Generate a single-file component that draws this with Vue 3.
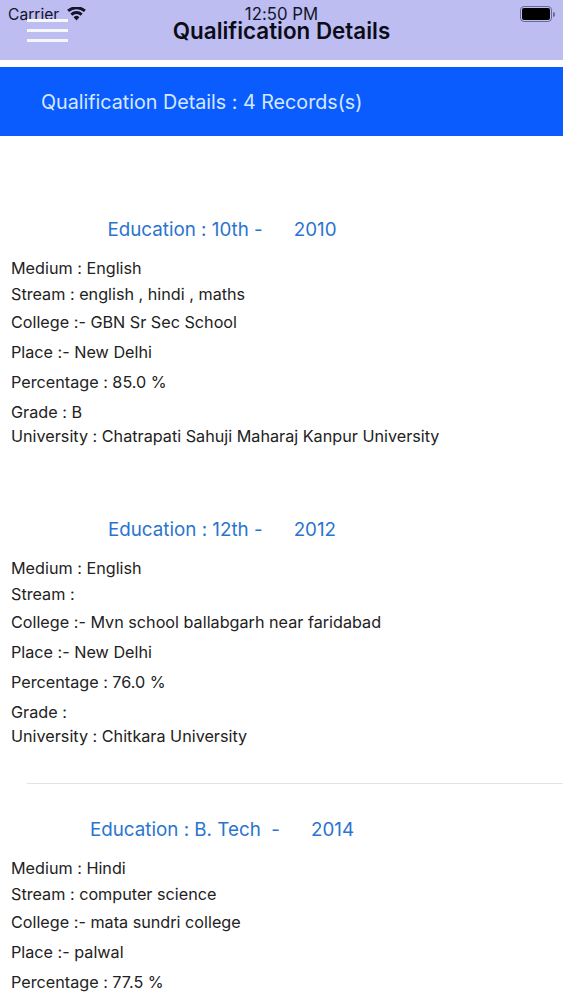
<script setup>
const records = [
  { title: 'Education : 10th -', year: '2010', medium: 'English', stream: 'english , hindi , maths', college: 'GBN Sr Sec School', place: 'New Delhi', pct: '85.0', grade: 'B', university: 'Chatrapati Sahuji Maharaj Kanpur University', full: true },
  { title: 'Education : 12th -', year: '2012', medium: 'English', stream: '', college: 'Mvn school ballabgarh near faridabad', place: 'New Delhi', pct: '76.0', grade: '', university: 'Chitkara University', full: true, divider: true },
  { title: 'Education : B. Tech  -', year: '2014', medium: 'Hindi', stream: 'computer science', college: 'mata sundri college', place: 'palwal', pct: '77.5', full: false }
]
</script>

<template>
  <div class="screen">
    <header class="nav">
      <div class="status">
        <div class="status-left">
          <span class="carrier">Carrier</span>
          <svg class="wifi" viewBox="0 0 20 15" width="19" height="14">
            <path d="M10 14.5 6.9 10.9a4.6 4.6 0 0 1 6.2 0Z" fill="#14142b"/>
            <path d="M5.5 9.3 3.4 6.9a10 10 0 0 1 13.2 0l-2.1 2.4a6.8 6.8 0 0 0-9 0Z" fill="#14142b"/>
            <path d="M2 5.3 0 3A15.2 15.2 0 0 1 20 3l-2 2.3a12.2 12.2 0 0 0-16 0Z" fill="#14142b"/>
          </svg>
        </div>
        <span class="time">12:50 PM</span>
        <div class="status-right">
          <div class="battery"><span class="battery-fill"></span></div>
          <span class="battery-tip"></span>
        </div>
      </div>
      <div class="nav-bar">
        <div class="burger"><span></span><span></span><span></span></div>
        <h1 class="nav-title">Qualification Details</h1>
      </div>
    </header>
    <div class="banner">Qualification Details : 4 Records(s)</div>
    <main class="list">
      <section v-for="r in records" :key="r.year" class="record">
        <div class="title"><span class="pre">{{ r.title }}</span><span>{{ r.year }}</span></div>
        <div class="row medium">Medium : {{ r.medium }}</div>
        <div class="row stream">Stream : {{ r.stream }}</div>
        <div class="row tall">College :- {{ r.college }}</div>
        <div class="row tall">Place :- {{ r.place }}</div>
        <div class="row tall">Percentage : {{ r.pct }} %</div>
        <template v-if="r.full">
          <div class="row tall">Grade : {{ r.grade }}</div>
          <div class="row univ">University : {{ r.university }}</div>
        </template>
        <div v-if="r.divider" class="divider"></div>
      </section>
    </main>
  </div>
</template>

<style>
html, body { margin: 0; background: #fff; }
</style>

<style scoped>
.screen {
  width: 563px;
  height: 1000px;
  overflow: hidden;
  background: #fff;
  font-family: Inter, "Liberation Sans", sans-serif;
  font-feature-settings: "calt" 0;
  color: #222;
}
.nav {
  height: 60px;
  background: #bdbdf2;
  position: relative;
}
.status {
  position: absolute;
  inset: 0 0 auto 0;
  height: 28px;
  display: grid;
  grid-template-columns: 1fr auto 1fr;
  align-items: center;
  padding: 0 8px;
  color: #14142b;
}
.status-left { display: flex; align-items: center; gap: 8px; font-size: 15.6px; }
.time { font-size: 16.8px; }
.status-right { display: flex; align-items: center; justify-content: flex-end; gap: 1px; }
.battery {
  width: 32px;
  height: 16px;
  border: 1.5px solid #6a6a96;
  border-radius: 4px;
  padding: 1px;
  box-sizing: border-box;
  display: flex;
}
.battery-fill { flex: 1; background: #000; border-radius: 2px; }
.battery-tip { width: 2px; height: 5px; background: #6a6a96; border-radius: 0 2px 2px 0; }
.nav-bar {
  height: 60px;
  display: flex;
  align-items: center;
  justify-content: center;
  position: relative;
}
.burger {
  position: absolute;
  left: 27px;
  top: 19px;
  width: 41px;
  display: flex;
  flex-direction: column;
  gap: 7px;
}
.burger span { height: 3px; background: #f6f6ff; }
.nav-title {
  margin: 0;
  font-size: 22.4px;
  font-weight: 600;
  color: #0c0c18;
}
.banner {
  margin-top: 7px;
  height: 69px;
  box-sizing: border-box;
  padding-left: 41px;
  background: #0a5cff;
  color: #d5e8ff;
  display: flex;
  align-items: center;
  font-size: 19.7px;
}
.list { padding-top: 78px; }
.record { height: 300px; }
.title {
  width: 444px;
  height: 30px;
  margin-bottom: 11px;
  display: flex;
  align-items: center;
  justify-content: center;
  gap: 31px;
  font-size: 18.8px;
  color: #2a74d0;
  white-space: pre;
}
.row { padding-left: 11px; font-size: 16.2px; line-height: 18px; display: flex; align-items: center; white-space: pre; }
.medium, .stream { height: 26px; }
.tall { height: 30px; }
.univ { height: 18px; }
.divider { margin: 38px 0 0 27px; height: 1px; background: #e2e2e2; }
</style>
